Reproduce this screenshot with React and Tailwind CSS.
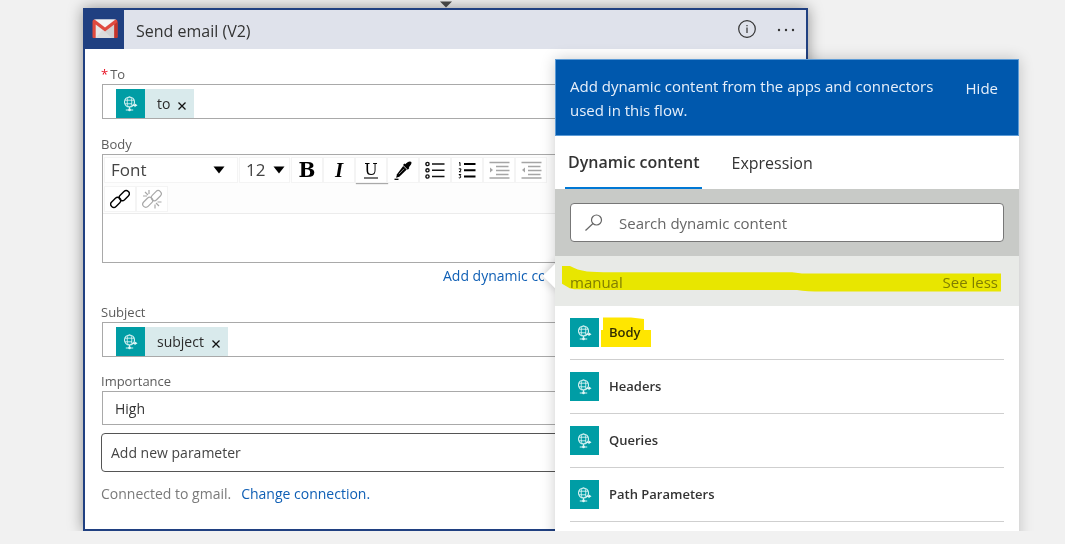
import React from "react";

const items = ["Body", "Headers", "Queries", "Path Parameters"];
const toolButton =
  "flex h-[26px] w-8 items-center justify-center border border-[#f4f4f4] bg-white text-black";
const labelText = "block h-5 text-[13px] leading-5 text-[#5c5c5c]";
const fieldBox = "ml-px flex border border-[#a9a9a9] bg-white";

function GlobeTile() {
  return (
    <span className="flex size-[29px] shrink-0 items-center justify-center bg-[#009da5]">
      <svg width="15" height="16" viewBox="0 0 15 16" fill="none" stroke="#d8f3f3" strokeWidth="0.9" aria-hidden="true">
        <circle cx="6.5" cy="6" r="5" strokeWidth="1.1" />
        <ellipse cx="6.5" cy="6" rx="2.3" ry="5" />
        <path d="M2 4.200h9M2 7.800h7M6.500 11v3" />
        <path d="M9 9.300h3.500" strokeWidth="1.400" />
        <path d="M11.500 7.300l3 2-3 2z" fill="#e4f7f7" stroke="none" />
        <path d="M2.800 14h2.400M7.800 14h2.400" strokeWidth="1.200" />
        <circle cx="6.500" cy="13.800" r="1.500" fill="#e4f7f7" stroke="none" />
      </svg>
    </span>
  );
}

function GmailLogo() {
  return (
    <svg width="26" height="20" viewBox="0 0 26 20" aria-hidden="true">
      <path d="M2 .5h22v18.500H2z" fill="#e6e6e6" />
      <path d="M3.500 19l7-8 2.500 2 2.500-2 7 8z" fill="#dcdcdc" />
      <path d="M13 12.500L22 6v13h-2.500z" fill="#d2d2d2" />
      <path d="M3 .5h20L13 8.500z" fill="#f4f4f4" />
      <path d="M.5 2.500Q.5.500 2.500.5L13 8.600 23.500.5q2 0 2 2V18q0 1-1 1H22.300V5.500L13 12.600 3.700 5.500V19H1.500q-1 0-1-1z" fill="#e04a3f" />
      <path d="M22.300 5.500l3.200-2.500V18q0 1-1 1h-2.200z" fill="#c3352b" />
    </svg>
  );
}

function Token({ name }) {
  return (
    <span className="flex h-[29px] items-center bg-[#d9eaec] text-[14px] text-[#2b2b2b]">
      <GlobeTile />
      <span className="pl-3">{name}</span>
      <button type="button" aria-label={"Remove " + name} className="ml-2 mr-2 flex size-2 items-center justify-center">
        <svg width="8" height="8" viewBox="0 0 8 8" stroke="#111" strokeWidth="1.300" className="mt-1" aria-hidden="true">
          <path d="M.5.5l7 7M7.500.5l-7 7" />
        </svg>
      </button>
    </span>
  );
}

function TokenField({ name, required }) {
  const title = name.charAt(0).toUpperCase() + name.slice(1);
  return (
    <div role="group" aria-label={title}>
      <span className={labelText}>
        {required && <span className="mr-0.5 text-[#e81123]">*</span>}
        {title}
      </span>
      <div className={fieldBox + " h-[35px] items-end pl-[13px]"}>
        <Token name={name} />
      </div>
    </div>
  );
}

function ToolSelect({ label, value, wide }) {
  return (
    <div
      className={
        "relative flex h-[26px] items-center border border-[#f4f4f4] bg-white " + (wide ? "w-[134px]" : "w-[51px]")
      }
    >
      <select
        aria-label={label}
        className="h-full w-full appearance-none bg-transparent pl-1.5 text-[17px] leading-6 text-[#444] outline-none"
      >
        <option>{value}</option>
      </select>
      <svg
        width="12"
        height="8"
        viewBox="0 0 12 8"
        className={"pointer-events-none absolute top-2 " + (wide ? "right-3" : "right-1")}
        aria-hidden="true"
      >
        <path d="M.5.5h11L6 7.500z" fill="#000" />
      </svg>
    </div>
  );
}

function Indent({ flip }) {
  return (
    <svg width="21" height="18" viewBox="0 0 21 18" stroke="#a5a5a5" strokeWidth="1.400" aria-hidden="true">
      <path d="M.5 1.500h20M7 5.500h12.500M7 9.500h13.500M7 13.500h12.500M.5 17h20" />
      <path d={flip ? "M4 6.500v5L1 9z" : "M1 6.500v5L4 9z"} fill="#a5a5a5" stroke="none" />
    </svg>
  );
}

function Chain({ broken }) {
  return (
    <svg
      width="20"
      height="20"
      viewBox="0 0 20 20"
      fill="none"
      stroke={broken ? "#a8a8a8" : "#000"}
      strokeWidth={broken ? 1.2 : 1.4}
      aria-hidden="true"
    >
      <rect x="8.500" y="3.500" width="11.500" height="6.200" rx="3.100" transform="rotate(-45 14.300 6.600)" />
      <rect x="0" y="10.300" width="11.500" height="6.200" rx="3.100" transform="rotate(-45 5.700 13.400)" />
      {broken && <path d="M3 3l3 3M7 1v4M1 7h4M14 14l3 3M13 15.500v4M15.500 13h4" />}
    </svg>
  );
}

function Editor() {
  return (
    <div className="ml-px h-[109px] border border-[#a9a9a9]">
      <div className="flex h-[59px] flex-col gap-[3px] overflow-hidden border-b border-[#ececec] bg-[#fdfdfd] pl-px pt-0.5">
        <div className="flex gap-px">
          <ToolSelect label="Font" value="Font" wide />
          <ToolSelect label="Font size" value="12" />
          <div className="flex">
            <button type="button" aria-label="Bold" className={toolButton}>
              <span className="font-['DejaVu_Serif',serif] text-[20px] font-bold leading-none">B</span>
            </button>
            <button type="button" aria-label="Italic" className={toolButton}>
              <span className="font-['Liberation_Serif',serif] text-[21px] font-bold italic leading-none">I</span>
            </button>
            <button type="button" aria-label="Underline" className={toolButton + " shadow-[1px_1px_1px_#aaa]"}>
              <span className="border-b-2 border-[#777] font-['DejaVu_Serif',serif] text-[16px] leading-[15px]">U</span>
            </button>
            <button type="button" aria-label="Text color" className={toolButton}>
              <svg width="18" height="19" viewBox="0 0 18 19" aria-hidden="true">
                <path d="M12 2.500q3-3 5-1.700 1.500 1.600-1.500 4.700l-.7.8.6.8-1.600 1.600-4.800-4.600 1.500-1.600.8.700z" />
                <path d="M9.200 5l3.600 3.600-7.500 7.200-3.200 1L3 13.200z" />
                <path d="M10 7.800l-5.200 5.400" stroke="#888" />
                <path d="M.5 18.300h4" stroke="#000" strokeWidth="1.300" />
              </svg>
            </button>
            <button type="button" aria-label="Bulleted list" className={toolButton}>
              <svg width="20" height="18" viewBox="0 0 20 18" fill="none" stroke="#111" strokeWidth="1.400" aria-hidden="true">
                <circle cx="2.500" cy="3" r="1.600" />
                <circle cx="2.500" cy="9.300" r="1.600" />
                <circle cx="2.500" cy="15.500" r="1.600" />
                <path d="M7 3h12.500M7 9.300h12.500M7 15.500h12.500" />
              </svg>
            </button>
            <button type="button" aria-label="Numbered list" className={toolButton}>
              <svg width="18" height="18" viewBox="0 0 18 18" stroke="#000" fill="none" aria-hidden="true">
                <path d="M6 3h11.500M6 9.300h11.500M6 15.500h11.500" strokeWidth="2" />
                <path d="M1 2l1-.5v3.500M.8 7.800h2v1.400l-1.600 1.600h1.900M.8 13.500h2l-1 1.500q1.400.3.800 1.500-.8.800-1.800.2" />
              </svg>
            </button>
            <button type="button" aria-label="Increase indent" className={toolButton}>
              <Indent />
            </button>
            <button type="button" aria-label="Decrease indent" className={toolButton}>
              <Indent flip />
            </button>
          </div>
        </div>
        <div className="flex">
          <button type="button" aria-label="Insert link" className={toolButton}>
            <Chain />
          </button>
          <button type="button" aria-label="Remove link" className={toolButton}>
            <Chain broken />
          </button>
        </div>
      </div>
      <textarea id="email-body" className="block h-12 w-full resize-none bg-transparent px-3 text-[14px] outline-none" />
    </div>
  );
}

function EmailCard() {
  return (
    <section className="ml-[83px] mr-[257px] border-2 border-[#204081] bg-white shadow-[0_0_14px_rgba(0,0,0,0.4)]">
      <header className="flex h-[39px] items-center bg-[#dfe2eb]">
        <span className="flex h-full w-[39px] items-center justify-center bg-[#204081] pb-0.5">
          <GmailLogo />
        </span>
        <h1 className="flex-1 pl-3 pt-0.5 text-[16px] text-[#333]">Send email (V2)</h1>
        <button type="button" aria-label="Information" className="mr-[21px] pb-0.5">
          <svg width="18" height="18" viewBox="0 0 18 18" fill="none" stroke="#333" strokeWidth="1.200" aria-hidden="true">
            <circle cx="9" cy="9" r="8.300" />
            <path d="M9 7.500v5.500M9 5v1.300" />
          </svg>
        </button>
        <button type="button" aria-label="More options" className="mr-[11px]">
          <svg width="18" height="4" viewBox="0 0 18 4" fill="#333" aria-hidden="true">
            <circle cx="2" cy="2" r="1.200" />
            <circle cx="9" cy="2" r="1.200" />
            <circle cx="16" cy="2" r="1.200" />
          </svg>
        </button>
      </header>
      <div className="px-4 pb-[25px] pt-[15px]">
        <TokenField name="to" required />
        <label htmlFor="email-body" className={labelText + " mt-[15px]"}>
          Body
        </label>
        <Editor />
        <a
          href="#dynamic"
          className="ml-[342px] block h-[26px] w-[101px] overflow-hidden whitespace-nowrap text-[14px] leading-[26px] text-[#0f5fb5]"
        >
          Add dynamic content
        </a>
        <div className="mt-[13px]">
          <TokenField name="subject" />
        </div>
        <label htmlFor="importance" className={labelText + " mt-[14px]"}>
          Importance
        </label>
        <div className={fieldBox}>
          <input
            id="importance"
            defaultValue="High"
            className="h-8 min-w-0 flex-1 px-3 text-[14px] text-[#333] outline-none"
          />
        </div>
        <button
          type="button"
          className="mt-2 block h-[39px] w-full rounded-sm border border-[#555] px-[9px] text-left text-[14px] text-[#444]"
        >
          Add new parameter
        </button>
        <p className="mt-3 flex h-5 gap-[10px] text-[14px] leading-5 text-[#7a7a7a]">
          Connected to gmail.
          <a href="#connection" className="text-[#0f5fb5]">
            Change connection.
          </a>
        </p>
      </div>
    </section>
  );
}

function DynamicPanel() {
  return (
    <aside className="absolute right-[46px] top-[59px] w-[464px] bg-white shadow-[0_0_14px_rgba(0,0,0,0.2)]">
      <span className="absolute -left-2 top-[207px] size-5 rotate-45 bg-white shadow-[0_0_10px_rgba(0,0,0,0.2)]" />
      <div className="relative bg-white pb-10">
        <div className="flex h-[77px] items-start justify-between border border-[#5c9bd6] bg-[#0058ad] pl-[14px] pr-5 pt-[14px] text-[15px] leading-6 text-[#e6effa]">
          <p className="w-[372px]">Add dynamic content from the apps and connectors used in this flow.</p>
          <button type="button" className="pt-0.5">
            Hide
          </button>
        </div>
        <div role="tablist" className="flex h-[53px] gap-[26px] pl-[10px] text-[16px] text-[#333]">
          <button
            type="button"
            role="tab"
            aria-selected="true"
            className="border-b-2 border-[#0078d4] px-[3px] font-semibold"
          >
            Dynamic content
          </button>
          <button type="button" role="tab" aria-selected="false" className="px-[3px]">
            Expression
          </button>
        </div>
        <div className="bg-[#c8cac7] px-[15px] py-[14px]">
          <div className="flex h-[39px] items-center gap-4 rounded-sm border border-[#777] bg-white pl-[13px]">
            <svg width="19" height="18" viewBox="0 0 19 18" fill="none" stroke="#666" strokeWidth="1.200" aria-hidden="true">
              <circle cx="12.500" cy="6" r="5" />
              <path d="M9 9.500L1.500 16.500" />
            </svg>
            <input
              type="text"
              aria-label="Search dynamic content"
              placeholder="Search dynamic content"
              className="h-full min-w-0 flex-1 text-[15px] outline-none placeholder:text-[#666]"
            />
          </div>
        </div>
        <div className="relative flex h-[50px] items-center justify-between bg-[#e8eae7] pl-[15px] pr-[21px] pt-0.5 text-[15px] text-[#808080]">
          <span>manual</span>
          <button type="button">See less</button>
          <svg
            className="pointer-events-none absolute left-[7px] top-[9px] mix-blend-multiply"
            width="440"
            height="28"
            viewBox="0 0 440 28"
            aria-hidden="true"
          >
            <path
              d="M0 1h8q7 4 17 5.500 10 1 30 .8h175l10 1.200H439v18H260q-15 0-25-1.500H40l-25-.8q-6 0-9-2l-6-3.500z"
              fill="#fffb00"
            />
          </svg>
        </div>
        <ul className="px-[15px]">
          {items.map((name, i) => (
            <li key={name} className="border-b border-[#cfcfcf]">
              <button
                type="button"
                className="flex h-[53px] w-full items-center gap-[10px] text-left text-[13px] font-semibold text-[#333]"
              >
                <GlobeTile />
                <span className="relative">
                  {name}
                  {i === 0 && (
                    <svg
                      className="pointer-events-none absolute -left-2 -top-[6px] mix-blend-multiply"
                      width="50"
                      height="31"
                      viewBox="0 0 50 31"
                      aria-hidden="true"
                    >
                      <path d="M2 .5h28l13 1.500v11h7v17H0V13h2z" fill="#ffe600" />
                    </svg>
                  )}
                </span>
              </button>
            </li>
          ))}
        </ul>
      </div>
    </aside>
  );
}

export default function App() {
  return (
    <div className="min-h-screen bg-[#f1f1f1] pb-[13px] font-['Open_Sans','Noto_Sans',sans-serif]">
      <main className="relative overflow-hidden pt-2">
        <EmailCard />
        <svg className="absolute left-[440px] top-0" width="12" height="8" viewBox="0 0 12 8" aria-hidden="true">
          <path d="M0 1.500h12L6 7.500z" fill="#444" />
        </svg>
        <DynamicPanel />
      </main>
    </div>
  );
}
